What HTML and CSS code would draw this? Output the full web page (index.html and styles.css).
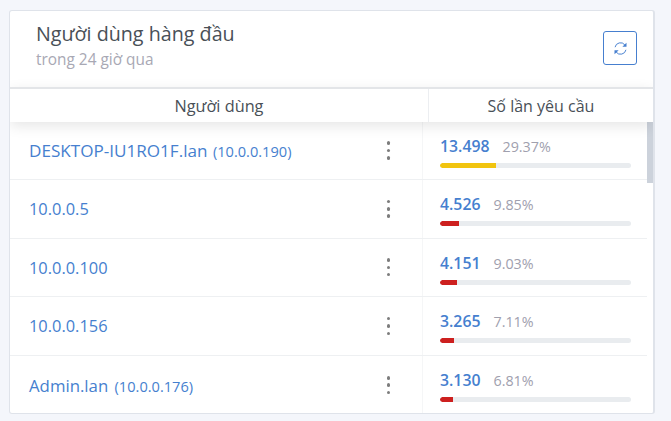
FILE: index.html
```html
<!DOCTYPE html>
<html lang="vi">
<head>
<meta charset="utf-8">
<title>Người dùng hàng đầu</title>
<link rel="stylesheet" href="styles.css">
</head>
<body>
<section class="card">
  <header class="card-head">
    <div class="head-text">
      <h1 class="title">Người dùng hàng đầu</h1>
      <p class="subtitle">trong 24 giờ qua</p>
    </div>
    <button class="refresh" type="button" aria-label="Làm mới">
      <svg viewBox="0 0 16 16" width="15" height="15" fill="none" stroke="currentColor" stroke-width="1.05">
        <path d="M2.2 6.6A5.9 5.9 0 0 1 12.6 4.1"/>
        <path d="M13.8 9.4A5.9 5.9 0 0 1 3.4 11.9"/>
        <path d="M14.4 1.8v4.4H10z" fill="currentColor" stroke="none"/>
        <path d="M1.6 14.2V9.8H6z" fill="currentColor" stroke="none"/>
      </svg>
    </button>
  </header>
  <div class="table-head">
    <div class="th th-user">Người dùng</div>
    <div class="th th-count">Số lần yêu cầu</div>
  </div>
  <div class="table-body">
    <div class="row">
      <div class="cell-user"><a class="name wide">DESKTOP-IU1RO1F.lan <small>(10.0.0.190)</small></a><span class="dots"><i></i><i></i><i></i></span></div>
      <div class="cell-count">
        <div class="nums"><b>13.498</b><span>29.37%</span></div>
        <div class="bar"><div class="fill warn" style="width:29.37%"></div></div>
      </div>
    </div>
    <div class="row">
      <div class="cell-user"><a class="name">10.0.0.5</a><span class="dots"><i></i><i></i><i></i></span></div>
      <div class="cell-count">
        <div class="nums"><b>4.526</b><span>9.85%</span></div>
        <div class="bar"><div class="fill" style="width:9.85%"></div></div>
      </div>
    </div>
    <div class="row">
      <div class="cell-user"><a class="name">10.0.0.100</a><span class="dots"><i></i><i></i><i></i></span></div>
      <div class="cell-count">
        <div class="nums"><b>4.151</b><span>9.03%</span></div>
        <div class="bar"><div class="fill" style="width:9.03%"></div></div>
      </div>
    </div>
    <div class="row">
      <div class="cell-user"><a class="name">10.0.0.156</a><span class="dots"><i></i><i></i><i></i></span></div>
      <div class="cell-count">
        <div class="nums"><b>3.265</b><span>7.11%</span></div>
        <div class="bar"><div class="fill" style="width:7.11%"></div></div>
      </div>
    </div>
    <div class="row last">
      <div class="cell-user"><a class="name host">Admin.lan <small>(10.0.0.176)</small></a><span class="dots"><i></i><i></i><i></i></span></div>
      <div class="cell-count">
        <div class="nums"><b>3.130</b><span>6.81%</span></div>
        <div class="bar"><div class="fill" style="width:6.81%"></div></div>
      </div>
    </div>
    <div class="scroll-thumb"></div>
  </div>
</section>
</body>
</html>
```
FILE: styles.css
```css
* { box-sizing: border-box; }
html, body { margin: 0; height: 100%; }
body {
  background: #f4f6fb;
  padding: 10px 16px 7px 9px;
  font-family: "Open Sans", "Noto Sans", sans-serif;
  color: #495057;
  overflow: hidden;
}
.card {
  width: 646px;
  height: 404px;
  background: #fff;
  border: 1px solid #dfe3ea;
  border-right-width: 2px;
  border-radius: 3px;
  display: flex;
  flex-direction: column;
  overflow: hidden;
}
.card-head {
  height: 76px;
  flex: none;
  display: flex;
  align-items: flex-start;
  justify-content: space-between;
  padding: 10px 16px 0 26px;
}
.title {
  margin: 0;
  font-size: 19.7px;
  line-height: 26px;
  font-weight: 400;
  color: #495057;
}
.subtitle {
  margin: 3px 0 0;
  font-size: 15.4px;
  line-height: 19px;
  color: #a8a8b4;
}
.refresh {
  margin-top: 10px;
  width: 34px;
  height: 34px;
  padding: 0;
  display: flex;
  align-items: center;
  justify-content: center;
  background: #fff;
  border: 1px solid #467fcf;
  border-radius: 3px;
  color: #467fcf;
}
.table-head {
  height: 35px;
  flex: none;
  display: flex;
  border-top: 2px solid #e3e5e8;
  position: relative;
  z-index: 1;
  background: #fff;
  box-shadow: 0 4px 14px rgba(0, 0, 0, .1);
  font-size: 16px;
  color: #495057;
}
.th {
  display: flex;
  align-items: center;
  justify-content: center;
}
.th-user { width: 419px; border-right: 1px solid #eceef1; font-size: 16.3px; }
.th-count { flex: 1; }
.table-body {
  flex: 1;
  position: relative;
  padding-right: 6px;
  min-height: 0;
}
.row {
  height: 58.6px;
  display: flex;
  border-bottom: 1px solid #eef0f2;
}
.row:first-child { height: 58px; }
.row.last { border-bottom: 0; }
.cell-user {
  width: 413px;
  padding: 0 32px 0 19px;
  display: flex;
  align-items: center;
  justify-content: space-between;
  border-right: 1px solid #f5f6f7;
}
.name {
  color: #467fcf;
  font-size: 16.4px;
  white-space: nowrap;
}
.name.wide { font-size: 17.1px; }
.name.host { font-size: 16.8px; }
.name small { font-size: 14.6px; margin-left: 1px; }
.name.host small { margin-left: 2px; }
.dots {
  display: flex;
  flex-direction: column;
  gap: 3.8px;
}
.dots i {
  width: 3.5px;
  height: 3.5px;
  border-radius: 50%;
  background: #7d7d7d;
}
.cell-count {
  flex: 1;
  padding: 14px 16px 0 17px;
}
.nums {
  display: flex;
  align-items: baseline;
  gap: 13px;
  line-height: 20px;
  white-space: nowrap;
}
.nums b {
  font-size: 15.8px;
  font-weight: 600;
  color: #467fcf;
}
.nums span {
  font-size: 14.3px;
  color: #a0a0ae;
}
.bar {
  margin-top: 6px;
  height: 5px;
  border-radius: 3px;
  background: #e9ecef;
  overflow: hidden;
}
.fill {
  height: 100%;
  background: #cd201f;
  border-radius: 3px 0 0 3px;
}
.fill.warn { background: #f1c40f; }
.scroll-thumb {
  position: absolute;
  top: 0;
  right: 0;
  width: 6px;
  height: 61px;
  background: #ccd2db;
}
```
